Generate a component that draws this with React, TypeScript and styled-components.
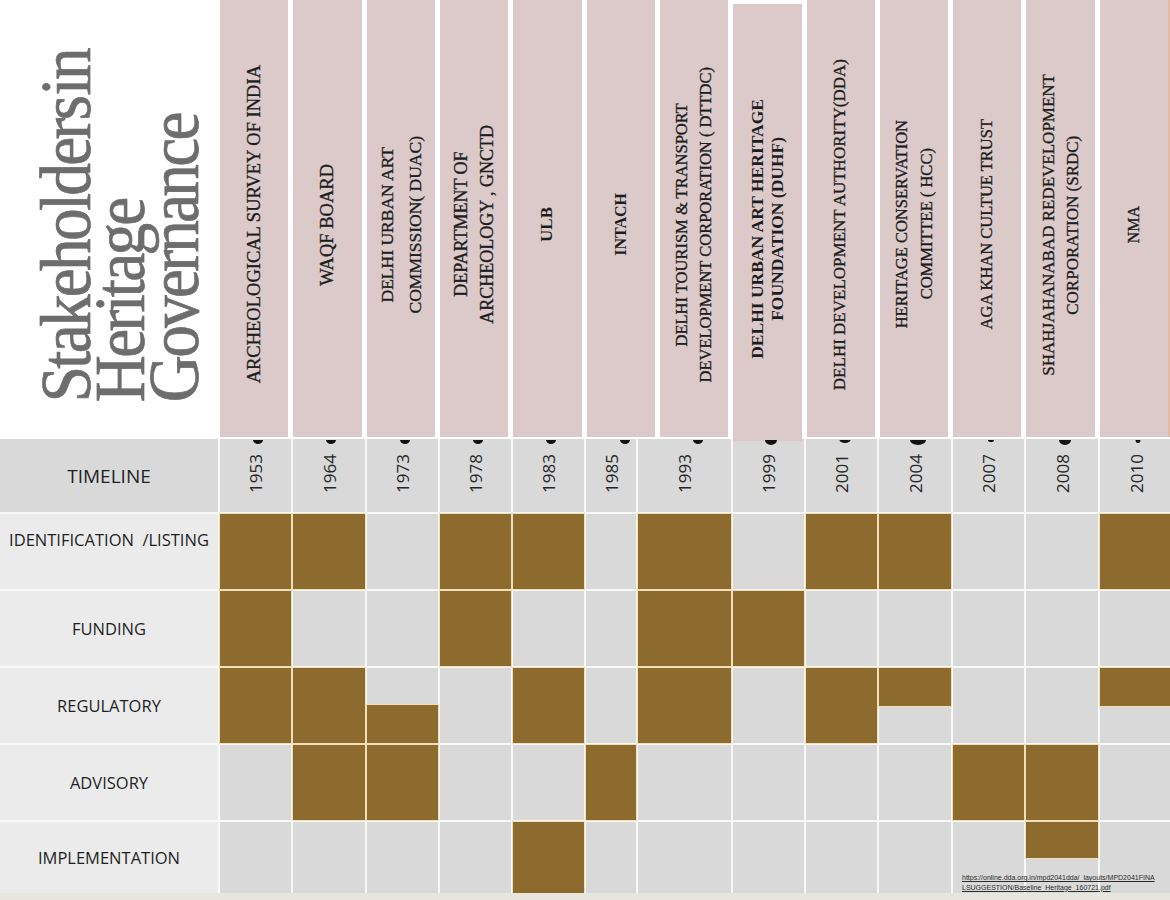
import React from "react"
import styled, { createGlobalStyle } from "styled-components"

type Fill = 0 | 1 | "t" | "b"

interface Stakeholder {
  name: string[]
  year: string
  size: number
  bold?: boolean
  lh?: number
  shift?: boolean
  dot: [number, number]
}

const stakeholders: Stakeholder[] = [
  { name: ["ARCHEOLOGICAL SURVEY OF INDIA"], year: "1953", size: 18.5, dot: [10, 4] },
  { name: ["WAQF BOARD"], year: "1964", size: 18.5, dot: [10, 4] },
  { name: ["DELHI URBAN ART", "COMMISSION( DUAC)"], year: "1973", size: 17.5, lh: 28, dot: [10, 4] },
  { name: ["DEPARTMENT OF", "ARCHEOLOGY  , GNCTD"], year: "1978", size: 18, lh: 26, dot: [10, 4] },
  { name: ["ULB"], year: "1983", size: 17, bold: true, dot: [10, 4] },
  { name: ["INTACH"], year: "1985", size: 16, bold: true, dot: [10, 4] },
  {
    name: ["DELHI TOURISM & TRANSPORT", "DEVELOPMENT CORPORATION ( DTTDC)"],
    year: "1993",
    size: 16.5,
    lh: 24,
    dot: [10, 4],
  },
  {
    name: ["DELHI URBAN ART HERITAGE", "FOUNDATION (DUHF)"],
    year: "1999",
    size: 17.5,
    bold: true,
    lh: 20,
    shift: true,
    dot: [12, 5],
  },
  { name: ["DELHI DEVELOPMENT AUTHORITY(DDA)"], year: "2001", size: 17, dot: [11, 3] },
  { name: ["HERITAGE CONSERVATION", "COMMITTEE ( HCC)"], year: "2004", size: 16.5, lh: 25, dot: [16, 5] },
  { name: ["AGA KHAN CULTUE TRUST"], year: "2007", size: 16.5, dot: [6, 2] },
  {
    name: ["SHAHJAHANABAD REDEVELOPMENT", "CORPORATION (SRDC)"],
    year: "2008",
    size: 17,
    lh: 24,
    dot: [12, 5],
  },
  { name: ["NMA"], year: "2010", size: 16, dot: [5, 3] },
]

// column widths of the lower table (they are not all equal in the source)
const colWidths = [71, 72, 71, 71, 71, 50, 93, 71, 71, 72, 71, 72, 72]

const roles: { label: string; top?: boolean; cells: Fill[] }[] = [
  { label: "IDENTIFICATION  /LISTING", top: true, cells: [1, 1, 0, 1, 1, 0, 1, 0, 1, 1, 0, 0, 1] },
  { label: "FUNDING", cells: [1, 0, 0, 1, 0, 0, 1, 1, 0, 0, 0, 0, 0] },
  { label: "REGULATORY", cells: [1, 1, "b", 0, 1, 0, 1, 0, 1, "t", 0, 0, "t"] },
  { label: "ADVISORY", cells: [0, 1, 1, 0, 0, 1, 0, 0, 0, 0, 1, 1, 0] },
  { label: "IMPLEMENTATION", cells: [0, 0, 0, 0, 1, 0, 0, 0, 0, 0, 0, "t", 0] },
]

const GlobalStyle = createGlobalStyle`
  html, body {
    margin: 0;
    padding: 0;
    background: #fff;
    overflow: hidden;
  }
  body {
    font-family: "Open Sans", "Liberation Sans", sans-serif;
  }
`

const Page = styled.div`
  position: relative;
  width: 1170px;
  height: 900px;
  overflow: hidden;
  display: flex;
  flex-direction: column;
  background: #fff;
`

const Header = styled.header`
  display: flex;
  height: 437px;
  flex-shrink: 0;
`

const TitleCell = styled.div`
  width: 220px;
  flex-shrink: 0;
  padding-left: 39px;
  box-sizing: border-box;
  display: flex;
  align-items: flex-start;
`

const Title = styled.h1`
  margin: 0;
  height: 419px;
  writing-mode: vertical-rl;
  transform: rotate(180deg) scaleY(0.92);
  font-family: "Liberation Serif", "DejaVu Serif", serif;
  font-weight: 400;
  font-size: 71px;
  line-height: 54px;
  letter-spacing: -3px;
  word-spacing: -12px;
  white-space: nowrap;
  color: #6d6d6d;
  -webkit-text-stroke: 0.7px #6d6d6d;
`

const Bars = styled.div`
  width: 950px;
  display: flex;
  gap: 5px;
`

const Bar = styled.div<{ $shift?: boolean; $last?: boolean }>`
  position: relative;
  flex: 1;
  display: flex;
  align-items: center;
  justify-content: center;
  padding-top: 12px;
  box-sizing: border-box;
  background: #dccaca;
  margin-top: ${p => (p.$shift ? "4px" : "0")};
  margin-bottom: ${p => (p.$shift ? "-4px" : "0")};
  border-right: ${p => (p.$last ? "2px solid #e4b9a2" : "none")};
`

const BarLabel = styled.span<{ $size: number; $bold?: boolean; $lh?: number }>`
  writing-mode: vertical-rl;
  transform: rotate(180deg);
  text-align: center;
  white-space: nowrap;
  font-family: "Liberation Serif", "DejaVu Serif", serif;
  font-size: ${p => p.$size}px;
  font-weight: ${p => (p.$bold ? 700 : 400)};
  line-height: ${p => (p.$lh ? `${p.$lh}px` : "1.2")};
  color: #1d1d1d;
  -webkit-text-stroke: ${p => (p.$bold ? "0" : "0.35px #1d1d1d")};
`

// remnant of the timeline markers, peeking out below each bar
const Dot = styled.span<{ $w: number; $h: number; $shift?: boolean }>`
  position: absolute;
  z-index: 2;
  left: calc(50% + 4px);
  top: calc(100% + ${p => (p.$shift ? -1 : 3)}px);
  width: ${p => p.$w}px;
  height: ${p => p.$h}px;
  transform: translateX(-50%);
  background: #111;
  border-radius: 0 0 50% 50% / 0 0 100% 100%;
`

const Table = styled.div`
  display: grid;
  grid-template-columns: 218px ${colWidths.map(w => `${w}px`).join(" ")};
  grid-template-rows: 73px 75px 75px 75px 75px 71px;
  gap: 2px;
  margin-top: 2px;
  width: 1172px;
  background: #f8f8f6;
  flex-shrink: 0;
`

const RowLabel = styled.div<{ $top?: boolean; $dark?: boolean }>`
  display: flex;
  justify-content: center;
  align-items: ${p => (p.$top ? "flex-start" : "center")};
  padding-top: ${p => (p.$top ? "14px" : "0")};
  box-sizing: border-box;
  background: ${p => (p.$dark ? "#d9d9d9" : "#ebebeb")};
  font-size: ${p => (p.$dark ? "19px" : "16.5px")};
  color: #1f1f1f;
  white-space: pre;
`

const YearCell = styled.div`
  display: flex;
  justify-content: center;
  align-items: center;
  padding-bottom: 5px;
  box-sizing: border-box;
  background: #d9d9d9;
`

const Year = styled.span`
  writing-mode: vertical-rl;
  transform: rotate(180deg);
  font-size: 17px;
  color: #262626;
`

const Cell = styled.div<{ $fill: Fill }>`
  display: flex;
  flex-direction: column;
  justify-content: ${p => (p.$fill === "b" ? "flex-end" : "flex-start")};
  background: #d9d9d9;
`

const Block = styled.div<{ $fill: Fill }>`
  height: ${p => (p.$fill === 1 ? "100%" : "51%")};
  background: #8d6b2f;
  box-shadow: 0 0 0 1px #f2dfb6;
`

const Strip = styled.div`
  flex: 1;
  background: #e6e6dc;
`

const Source = styled.a`
  position: absolute;
  left: 962px;
  top: 873px;
  font-family: "Liberation Sans", Arial, sans-serif;
  font-size: 7px;
  line-height: 9.5px;
  color: #2c2c2c;
  text-decoration: underline;
  white-space: nowrap;
`

const App: React.FC = () => {
  return (
    <Page>
      <GlobalStyle />
      <Header>
        <TitleCell>
          <Title>
            Stakeholders in
            <br />
            Heritage
            <br />
            Governance
          </Title>
        </TitleCell>
        <Bars>
          {stakeholders.map((s, i) => (
            <Bar key={s.year} $shift={s.shift} $last={i === stakeholders.length - 1}>
              <BarLabel $size={s.size} $bold={s.bold} $lh={s.lh}>
                {s.name.map((line, j) => (
                  <React.Fragment key={j}>
                    {j > 0 && <br />}
                    {line}
                  </React.Fragment>
                ))}
              </BarLabel>
              <Dot $w={s.dot[0]} $h={s.dot[1]} $shift={s.shift} />
            </Bar>
          ))}
        </Bars>
      </Header>
      <Table>
        <RowLabel $dark>TIMELINE</RowLabel>
        {stakeholders.map(s => (
          <YearCell key={s.year}>
            <Year>{s.year}</Year>
          </YearCell>
        ))}
        {roles.map(r => (
          <React.Fragment key={r.label}>
            <RowLabel $top={r.top}>{r.label}</RowLabel>
            {r.cells.map((f, i) => (
              <Cell key={i} $fill={f}>
                {f !== 0 && <Block $fill={f} />}
              </Cell>
            ))}
          </React.Fragment>
        ))}
      </Table>
      <Strip />
      <Source href="#">
        https://online.dda.org.in/mpd2041dda/_layouts/MPD2041FINA
        <br />
        LSUGGESTION/Baseline_Heritage_160721.pdf
      </Source>
    </Page>
  )
}

export default App
